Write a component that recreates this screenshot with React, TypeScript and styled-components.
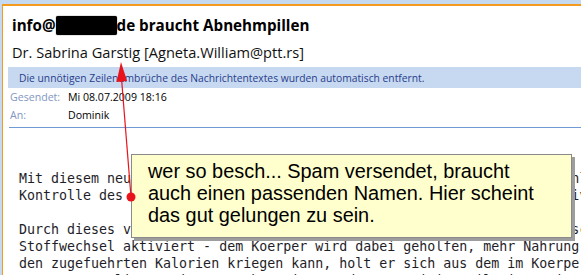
import styled, { createGlobalStyle } from "styled-components";

const GlobalStyle = createGlobalStyle`
  html, body {
    margin: 0;
    padding: 0;
    background: #c5d9f1;
    overflow: hidden;
  }
`;

const bodyLines = [
  "Mit diesem neuen Mittel bekommen Sie Ihr Gewicht endlich auf ungewoehnlich schnelle Weise unter",
  "Kontrolle des Hungergefuehls und bleiben dabei den ganzen Tag top aktiv und gut gelaunt.",
  "",
  "Durch dieses vollkommen natuerliche Mittel wird in Ihrem Koerper ein schneller",
  "Stoffwechsel aktiviert - dem Koerper wird dabei geholfen, mehr Nahrung zu verbrennen.",
  "den zugefuehrten Kalorien kriegen kann, holt er sich aus dem im Koerper gespeicherten",
  "Fett. So verlieren Sie ganz ohne Diaet und Sport einige Kilo in wenigen Wochen.",
];

export default function App() {
  return (
    <>
      <GlobalStyle />
      <Window>
        <Pane>
          <Subject>
            info@<Redacted />de braucht Abnehmpillen
          </Subject>
          <Sender>Dr. Sabrina Garstig [Agneta.William@ptt.rs]</Sender>
          <InfoBar>
            Die unnötigen Zeilenumbrüche des Nachrichtentextes wurden automatisch entfernt.
          </InfoBar>
          <MetaRow>
            <MetaLabel>Gesendet:</MetaLabel>
            <MetaValue>Mi 08.07.2009 18:16</MetaValue>
          </MetaRow>
          <MetaRow>
            <MetaLabel>An:</MetaLabel>
            <MetaValue>Dominik</MetaValue>
          </MetaRow>
          <Separator />
          <MessageBody>
            {bodyLines.map((line, index) => (
              <BodyLine key={index}>{line || "\u00a0"}</BodyLine>
            ))}
          </MessageBody>
        </Pane>
      </Window>

      <Callout>
        <CalloutText>
          wer so besch... Spam versendet, braucht
          <br />
          auch einen passenden Namen. Hier scheint
          <br />
          das gut gelungen zu sein.
        </CalloutText>
      </Callout>

      <Pointer width="581" height="275" viewBox="0 0 581 275">
        <line x1="131" y1="197" x2="121" y2="72" stroke="#e8131b" strokeWidth="1.2" />
        <polygon points="121,62 116.5,82 127,81" fill="#e8131b" />
        <circle cx="131" cy="197" r="4.5" fill="#e8131b" />
      </Pointer>
    </>
  );
}

const Window = styled.div`
  width: 581px;
  height: 275px;
  padding: 4px 0 0 2px;
  box-sizing: border-box;
  overflow: hidden;
`;

const Pane = styled.div`
  height: 100%;
  background: #ffffff;
  border-top: 2px solid #f39a1f;
  border-left: 1px solid #f39a1f;
  box-sizing: border-box;
  font-family: "Open Sans", "Noto Sans", sans-serif;
`;

const Subject = styled.div`
  padding: 9px 0 0 9px;
  font-size: 15.2px;
  font-weight: 700;
  line-height: 20px;
  color: #000;
  display: flex;
  align-items: center;
`;

const Redacted = styled.span`
  display: inline-block;
  width: 61px;
  height: 19px;
  background: #000;
  border-radius: 2px;
  box-shadow: 0 0 1px #000;
`;

const Sender = styled.div`
  margin-top: 7px;
  padding-left: 9px;
  font-size: 14.6px;
  line-height: 20px;
  color: #111;
`;

const InfoBar = styled.div`
  margin: 5px 0 0 5px;
  height: 21px;
  padding-left: 11px;
  display: flex;
  align-items: center;
  background: #c6d9f0;
  color: #2a3c8c;
  font-size: 10.3px;
`;

const MetaRow = styled.div`
  display: flex;
  align-items: center;
  height: 18px;
  padding-left: 7px;
  font-size: 10.6px;
  &:first-of-type {
    margin-top: 4px;
  }
`;

const MetaLabel = styled.span`
  width: 58px;
  color: #8196c3;
`;

const MetaValue = styled.span`
  color: #000;
`;

const Separator = styled.div`
  margin: 3px 0 0 6px;
  height: 1px;
  background: #6f9ad6;
`;

const MessageBody = styled.div`
  padding: 42px 0 0 16px;
  font-family: "DejaVu Sans Mono", "Liberation Mono", monospace;
  font-size: 13.3px;
  line-height: 17px;
  color: #1e1e28;
  white-space: pre;
  overflow: hidden;
`;

const BodyLine = styled.div``;

const Callout = styled.div`
  position: absolute;
  left: 131px;
  top: 154px;
  width: 441px;
  height: 84px;
  box-sizing: border-box;
  background: #ffffcd;
  border: 1px solid #8a8a8a;
  box-shadow: 3px 3px 0 #9d9d9d;
`;

const CalloutText = styled.div`
  padding: 5px 0 0 16px;
  font-family: "Liberation Sans", Arial, sans-serif;
  font-size: 19.9px;
  line-height: 22px;
  color: #000;
`;

const Pointer = styled.svg`
  position: absolute;
  left: 0;
  top: 0;
  pointer-events: none;
`;
